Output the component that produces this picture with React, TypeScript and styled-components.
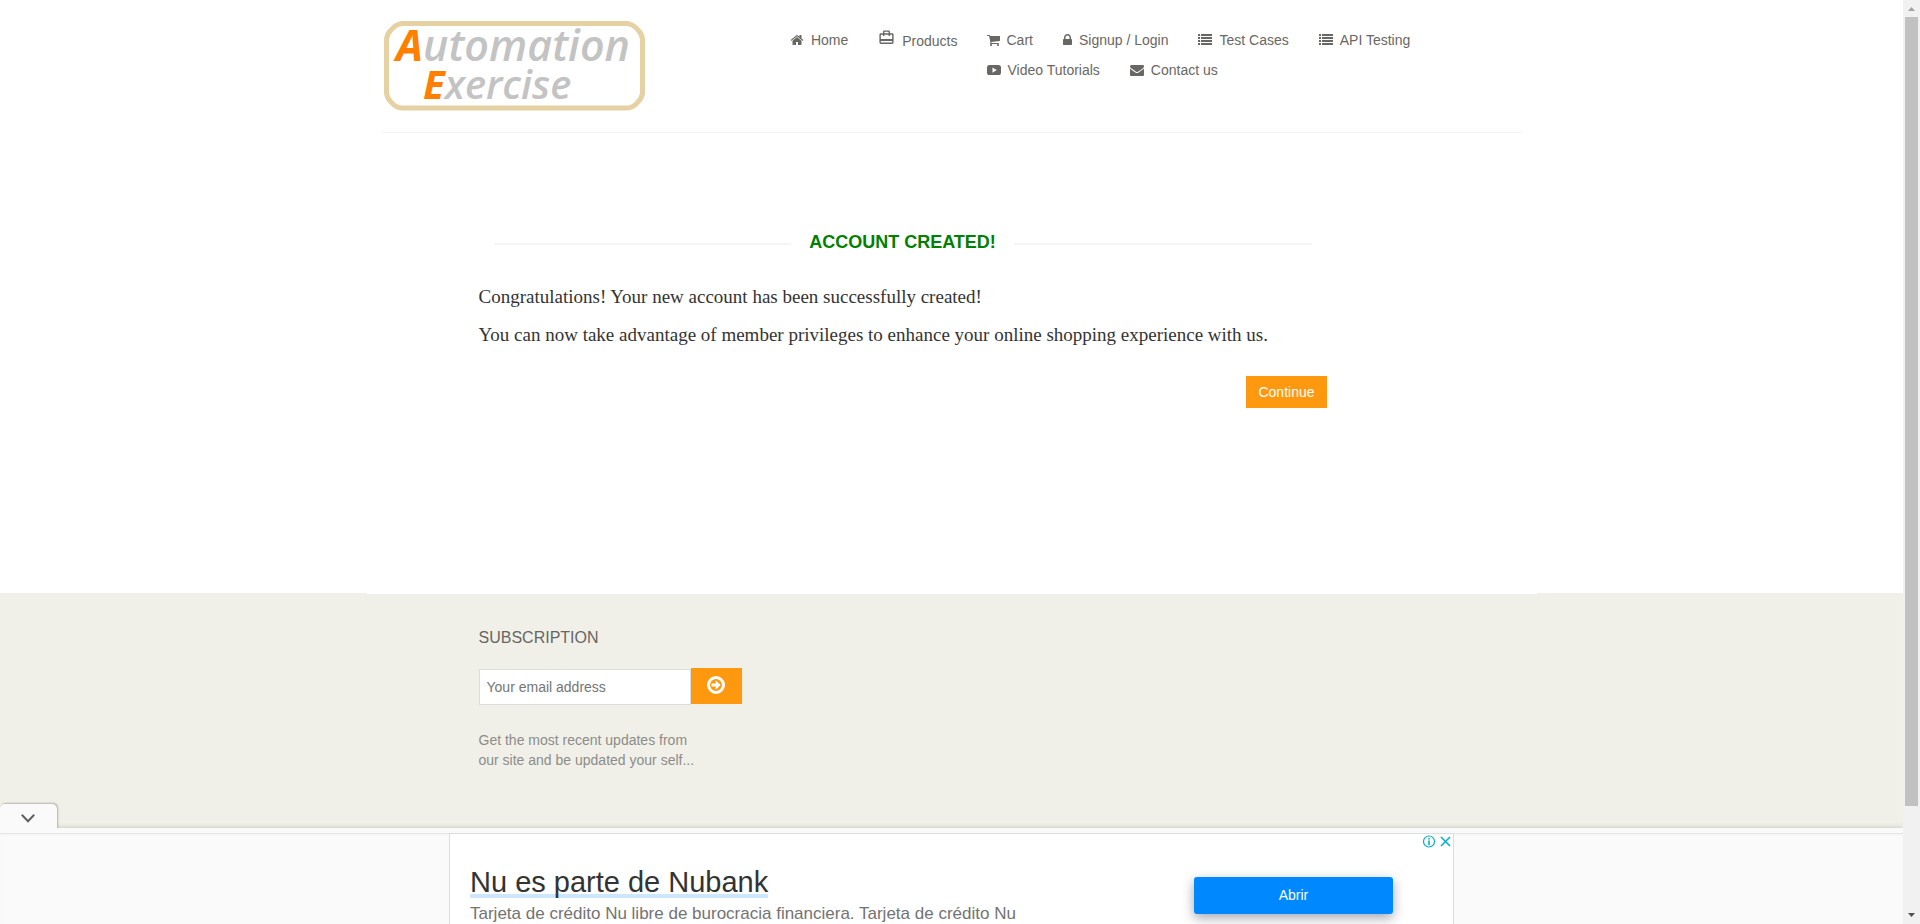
import React from 'react';
import styled, { createGlobalStyle } from 'styled-components';
import { MdCardTravel } from 'react-icons/md';

const sans = `"Liberation Sans", Arial, sans-serif`;

const GlobalStyle = createGlobalStyle`
  *, *::before, *::after { box-sizing: border-box; }
  body { margin: 0; background: #ffffff; font-family: ${sans}; font-size: 14px; line-height: 20px; color: #696763; }
  h2, p, ul { margin: 0; padding: 0; }
  a { color: inherit; text-decoration: none; }
`;

const Screen = styled.div`
  display: flex;
  height: 100vh;
  overflow: hidden;
`;

const Viewport = styled.div`
  position: relative;
  flex: 1;
  min-width: 0;
  display: flex;
  flex-direction: column;
  overflow: hidden;
`;

const Container = styled.div`
  width: 100%;
  max-width: 1170px;
  margin: 0 auto;
  padding: 0 15px;
`;

const HeaderRow = styled.div`
  display: flex;
  justify-content: space-between;
  align-items: flex-start;
  height: 133px;
  padding: 20px 110px 0 0;
  border-bottom: 1px solid #f5f5f5;
`;

const LogoLink = styled.a`
  display: block;
  margin-left: 2px;
`;

const Nav = styled.nav`
  display: flex;
  gap: 29px;
  padding-top: 10px;
`;

const NavList = styled.ul<{ $wrap?: boolean }>`
  display: flex;
  flex-wrap: ${p => (p.$wrap ? 'wrap' : 'nowrap')};
  align-items: flex-start;
  gap: 10px 30px;
  max-width: 425px;
  list-style: none;
`;

const NavLink = styled.a`
  display: flex;
  align-items: center;
  gap: 7px;
  height: 20px;
  white-space: nowrap;
`;

const ProductsLink = styled(NavLink)`
  align-items: flex-start;
  line-height: 22px;

  svg { margin-top: -1px; }
`;

const Main = styled.main`
  position: relative;
  z-index: 1;
  width: 100%;
  max-width: 1170px;
  margin: 0 auto -1px;
  padding: 96px 210px 186px 112px;
  background: #ffffff;
`;

const Title = styled.h2`
  display: flex;
  align-items: center;
  gap: 18px;
  margin: 0 15px 28px;
  color: #008000;
  font-size: 18px;
  font-weight: 700;
  line-height: 26px;
  white-space: nowrap;

  &::before, &::after {
    content: "";
    flex: 1;
    height: 2px;
    margin-top: 4px;
    background: #f5f5f5;
  }
`;

const Message = styled.p`
  margin-bottom: 10px;
  color: #333333;
  font-family: Garamond, "Liberation Serif", "Times New Roman", serif;
  font-size: 19px;
  line-height: 28px;
`;

const Actions = styled.div`
  display: flex;
  justify-content: flex-end;
  padding-top: 17px;
`;

const ContinueLink = styled.a`
  padding: 6px 12px;
  background: #fe980f;
  color: #ffffff;
`;

const Footer = styled.footer`
  flex: 1;
  background: #f0f0e9;
`;

const FooterInner = styled(Container)`
  padding: 35px 112px 0;
`;

const FooterHeading = styled.h2`
  margin-bottom: 20px;
  color: #666663;
  font-size: 16px;
  font-weight: 400;
  line-height: 20px;
`;

const SubscribeForm = styled.form`
  display: flex;
  align-items: flex-start;
  margin-bottom: 25px;
`;

const EmailInput = styled.input`
  width: 212px;
  height: 36px;
  margin: 1px 0 0;
  padding: 0 7px;
  border: 1px solid #dddddd;
  border-radius: 0;
  background: #ffffff;
  font: 14px ${sans};

  &::placeholder { color: #757575; opacity: 1; }
`;

const SubmitButton = styled.button`
  display: flex;
  justify-content: center;
  width: 51px;
  height: 36px;
  margin: 0;
  padding: 6px 0;
  border: 0;
  background: #fe980f;
  color: #ffffff;
`;

const FooterNote = styled.p`
  color: #8c8c88;
`;

const AdBar = styled.aside`
  position: absolute;
  z-index: 2;
  left: 0;
  right: 0;
  bottom: 0;
  height: 96px;
  padding-top: 5px;
  background: #fafafa;
  box-shadow: 0 0 5px rgba(0, 0, 0, 0.2);
`;

const AdToggle = styled.button`
  position: absolute;
  top: -24px;
  left: 0;
  display: flex;
  align-items: center;
  justify-content: center;
  width: 57px;
  height: 25px;
  padding: 3px 1px 0 0;
  border: 0;
  border-radius: 5px 5px 0 0;
  background: #fafafa;
  box-shadow: 1px -1px 2px rgba(0, 0, 0, 0.25);
  clip-path: inset(-4px -4px 0 0);
`;

const AdStrip = styled.div`
  display: flex;
  justify-content: center;
  height: 100%;
  box-shadow: inset 0 2px 2px -1px rgba(0, 0, 0, 0.1);
`;

const AdCard = styled.div`
  position: relative;
  display: flex;
  justify-content: space-between;
  width: 1005px;
  height: 100%;
  padding: 31px 60px 0 20px;
  overflow: hidden;
  border: 1px solid #dddddd;
  border-bottom: 0;
  background: #ffffff;
`;

const AdHeadline = styled.a`
  display: table;
  padding-top: 5px;
  border-bottom: 4px solid #cce7ff;
  color: #333333;
  font-size: 29px;
  line-height: 24px;
`;

const AdText = styled.p`
  padding-top: 4px;
  color: #737373;
  font-size: 17px;
  line-height: 24px;
`;

const AdButton = styled.button`
  width: 199px;
  height: 37px;
  margin-top: 12px;
  padding: 0 0 2px;
  border: 0;
  border-radius: 3px;
  background: #0088ff;
  box-shadow: 0 4px 12px rgba(30, 30, 60, 0.4);
  color: #ffffff;
  font: 14px ${sans};
`;

const AdControls = styled.div`
  position: absolute;
  top: 0;
  right: 2px;
  display: flex;
  gap: 4px;
`;

const AdControl = styled.button`
  display: flex;
  padding: 0;
  border: 0;
  background: transparent;
  color: #00aecd;
`;

const ScrollTrack = styled.div`
  display: flex;
  flex-direction: column;
  width: 17px;
  padding: 0 2px;
  background: #f1f1f1;
`;

const ScrollArrow = styled.svg`
  display: block;
  width: 13px;
  height: 17px;
`;

const ScrollThumb = styled.div`
  flex: 789;
  background: #c1c1c1;
`;

const ScrollRest = styled.div`
  flex: 101;
`;

const iconPaths = {
  home: 'M1408 992v480q0 26-19 45t-45 19h-384v-384h-256v384h-384q-26 0-45-19t-19-45v-480q0-1 .5-3t.5-3l575-474 575 474q1 2 1 6zm223-69l-62 74q-8 9-21 11h-3q-13 0-21-7l-692-577-692 577q-12 8-24 7-13-2-21-11l-62-74q-8-10-7-23.500t11-21.500l719-599q32-26 76-26t76 26l244 204v-195q0-14 9-23t23-9h192q14 0 23 9t9 23v408l219 182q10 8 11 21.500t-7 23.500z',
  cart: 'M704 1536q0 52-38 90t-90 38-90-38-38-90 38-90 90-38 90 38 38 90zm896 0q0 52-38 90t-90 38-90-38-38-90 38-90 90-38 90 38 38 90zm128-1088v512q0 24-16.500 42.500t-40.500 21.500l-1044 122q13 60 13 70 0 16-24 64h920q26 0 45 19t19 45-19 45-45 19h-1024q-26 0-45-19t-19-45q0-11 8-31.500t16-36 21.500-40 15.500-29.500l-177-823h-204q-26 0-45-19t-19-45 19-45 45-19h256q16 0 28.500 6.500t19.500 15.500 13 24.500 8 26 5.500 29.500 4.500 26h1201q26 0 45 19t19 45z',
  lock: 'M640 768h512v-192q0-106-75-181t-181-75-181 75-75 181v192zm832 96v576q0 40-28 68t-68 28h-960q-40 0-68-28t-28-68v-576q0-40 28-68t68-28h32v-192q0-184 132-316t316-132 316 132 132 316v192h32q40 0 68 28t28 68z',
  list: 'M0 128h256v256H0zM384 128h1408v256H384zM0 512h256v256H0zM384 512h1408v256H384zM0 896h256v256H0zM384 896h1408v256H384zM0 1280h256v256H0zM384 1280h1408v256H384z',
  video: 'M330 256h1132q330 0 330 330v620q0 330-330 330H330Q0 1536 0 1206V586Q0 256 330 256zM700 560v680l540-340z',
  envelope: 'M1792 710v794q0 66-47 113t-113 47h-1472q-66 0-113-47t-47-113v-794q44 49 101 87 362 246 497 345 57 42 92.500 65.500t94.500 48 110 24.500h2q51 0 110-24.500t94.500-48 92.500-65.500q170-123 498-345 57-39 100-87zm0-294q0 79-49 151t-122 123q-376 261-468 325-10 7-42.500 31t-54 38.500-52 32.500-57.500 27-50 9h-2q-23 0-50-9t-57.500-27-52-32.500-54-38.500-42.500-31q-91-64-262-182.500t-205-142.500q-62-42-117-115.500t-55-136.500q0-78 41.500-130t118.500-52h1472q65 0 112.500 47t47.500 113z',
};

/* View box start and width of each glyph in its 1792-unit square. */
const iconBoxes: Record<keyof typeof iconPaths, [number, number]> = {
  home: [64, 1664],
  cart: [64, 1664],
  lock: [320, 1152],
  list: [0, 1792],
  video: [0, 1792],
  envelope: [0, 1792],
};

function Icon({ name }: { name: keyof typeof iconPaths }) {
  const [x, w] = iconBoxes[name];
  return (
    <svg width={w / 128} height={14} viewBox={`${x} 0 ${w} 1792`} fill="currentColor" fillRule="evenodd" aria-hidden="true">
      <path d={iconPaths[name]} />
    </svg>
  );
}

const menu: { label: string; icon: keyof typeof iconPaths }[] = [
  { label: 'Cart', icon: 'cart' },
  { label: 'Signup / Login', icon: 'lock' },
  { label: 'Test Cases', icon: 'list' },
  { label: 'API Testing', icon: 'list' },
  { label: 'Video Tutorials', icon: 'video' },
  { label: 'Contact us', icon: 'envelope' },
];

function Logo() {
  return (
    <svg width="262" height="91" viewBox="0 0 262 91" role="img" aria-label="Automation Exercise">
      <path
        d="M18 3.500H243Q249 4 254 10Q258 14 258.500 19V73Q258 78 254 82Q249 88 243 88H18Q12 88 7 82Q3 78 2.500 73V19Q3 14 7 10Q12 4 18 3.500Z"
        fill="#ffffff"
        stroke="#e6d1a2"
        strokeWidth="5"
      />
      <g fontFamily={`"Lucida Handwriting", "Open Sans", sans-serif`} fontStyle="italic" fontWeight="600" fill="#c3c3c3">
        <text x="12" y="41" fontSize="43"><tspan fill="#ff8000" fontWeight="700">A</tspan>utomation</text>
        <text x="39" y="79" fontSize="40"><tspan fill="#ff8000" fontWeight="700">E</tspan>xercise</text>
      </g>
    </svg>
  );
}

export default function App() {
  return (
    <Screen>
      <GlobalStyle />
      <Viewport>
        <header>
          <Container>
            <HeaderRow>
              <LogoLink href="#"><Logo /></LogoLink>
              <Nav>
                <NavList>
                  <li><NavLink href="#"><Icon name="home" />Home</NavLink></li>
                  <li><ProductsLink href="#"><MdCardTravel size={17} />Products</ProductsLink></li>
                </NavList>
                <NavList $wrap>
                  {menu.map(item => (
                    <li key={item.label}><NavLink href="#"><Icon name={item.icon} />{item.label}</NavLink></li>
                  ))}
                </NavList>
              </Nav>
            </HeaderRow>
          </Container>
        </header>

        <Main>
          <Title>ACCOUNT CREATED!</Title>
          <Message>Congratulations! Your new account has been successfully created!</Message>
          <Message>You can now take advantage of member privileges to enhance your online shopping experience with us.</Message>
          <Actions><ContinueLink href="#">Continue</ContinueLink></Actions>
        </Main>

        <Footer>
          <FooterInner>
            <FooterHeading>SUBSCRIPTION</FooterHeading>
            <SubscribeForm onSubmit={e => e.preventDefault()}>
              <EmailInput type="email" aria-label="Your email address" placeholder="Your email address" />
              <SubmitButton type="submit" aria-label="Subscribe">
                <svg width="22" height="22" viewBox="0 0 22 22" aria-hidden="true">
                  <circle cx="11" cy="11" r="7.500" fill="none" stroke="currentColor" strokeWidth="3" />
                  <path d="M6.500 9.400H10.700V6.300L15.600 11L10.700 15.700V12.600H6.500Z" fill="currentColor" />
                </svg>
              </SubmitButton>
            </SubscribeForm>
            <FooterNote>Get the most recent updates from<br />our site and be updated your self...</FooterNote>
          </FooterInner>
        </Footer>

        <AdBar>
          <AdToggle type="button" aria-label="Collapse">
            <svg width="14" height="9" viewBox="0 0 14 9" fill="none" stroke="#616161" strokeWidth="2" aria-hidden="true">
              <path d="M0.800 0.800L7 7.200L13.200 0.800" />
            </svg>
          </AdToggle>
          <AdStrip>
            <AdCard>
              <div>
                <AdHeadline href="#">Nu es parte de Nubank</AdHeadline>
                <AdText>Tarjeta de crédito Nu libre de burocracia financiera. Tarjeta de crédito Nu</AdText>
              </div>
              <AdButton type="button">Abrir</AdButton>
              <AdControls>
                <AdControl type="button" aria-label="Ad information">
                  <svg width="14" height="15" viewBox="0 0 14 15" fill="none" stroke="currentColor" aria-hidden="true">
                    <circle cx="7" cy="7.500" r="5.500" strokeWidth="1.200" />
                    <path d="M7 6.500V11M7 4V5.400" strokeWidth="1.600" />
                  </svg>
                </AdControl>
                <AdControl type="button" aria-label="Close ad">
                  <svg width="11" height="15" viewBox="0 0 11 15" fill="none" stroke="currentColor" strokeWidth="1.500" aria-hidden="true">
                    <path d="M1 3L10 12M10 3L1 12" />
                  </svg>
                </AdControl>
              </AdControls>
            </AdCard>
          </AdStrip>
        </AdBar>
      </Viewport>

      <ScrollTrack aria-hidden="true">
        <ScrollArrow viewBox="0 0 13 17"><path d="M3 11L6.500 7L10 11Z" fill="#a3a3a3" /></ScrollArrow>
        <ScrollThumb />
        <ScrollRest />
        <ScrollArrow viewBox="0 0 13 17"><path d="M3 6L6.500 10L10 6Z" fill="#505050" /></ScrollArrow>
      </ScrollTrack>
    </Screen>
  );
}
